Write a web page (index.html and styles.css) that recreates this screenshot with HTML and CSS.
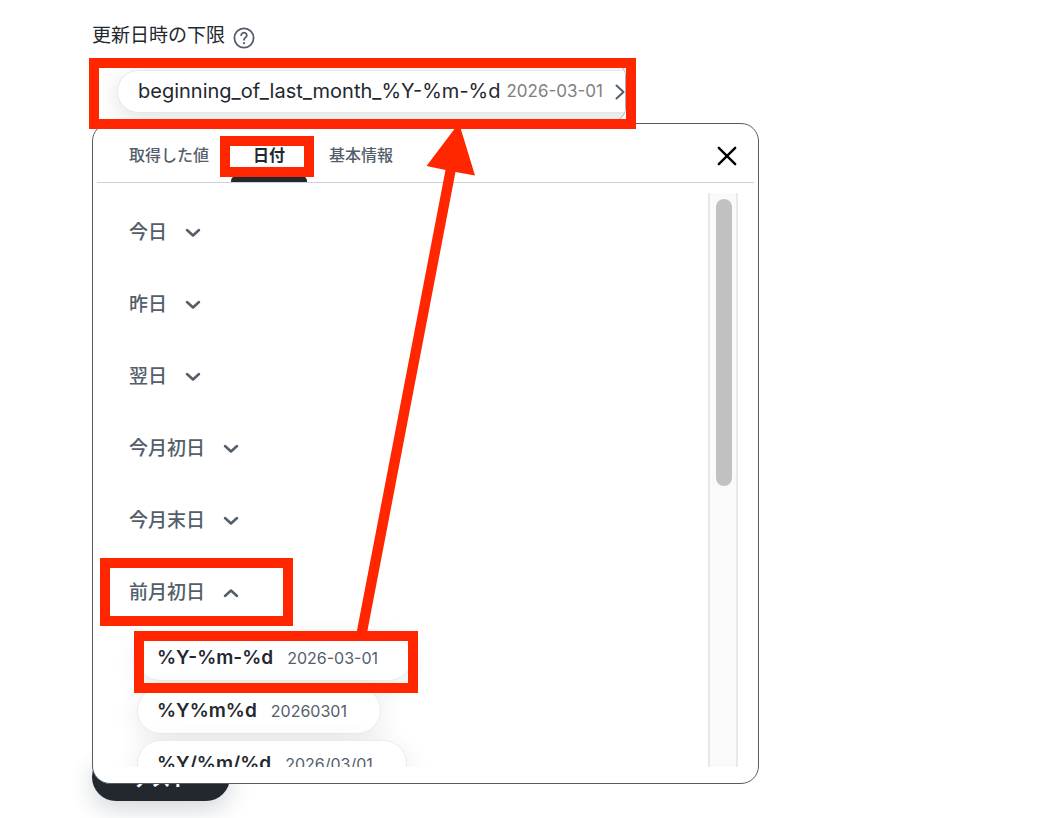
FILE: index.html
```
<!DOCTYPE html>
<html lang="ja">
<head>
<meta charset="utf-8">
<title>更新日時の下限</title>
<link rel="stylesheet" href="styles.css">
</head>
<body>
<main class="form">
  <div class="field-head">
    <span class="field-label" id="lower-label">更新日時の下限</span>
    <button class="help" type="button" aria-label="ヘルプ">
      <svg width="24" height="24" viewBox="0 0 24 24" fill="none" stroke="currentColor" stroke-width="1.800" stroke-linecap="round" stroke-linejoin="round"><circle cx="12" cy="12" r="9.600"/><path d="M9.200 9.200a2.800 2.700 0 1 1 4.300 2.400c-1 .7-1.500 1.200-1.500 2.200"/><path d="M12 17v.2" stroke-width="2.200"/></svg>
    </button>
  </div>
  <div class="picker">
    <div class="field" role="group" aria-labelledby="lower-label">
      <button class="token" type="button">
        <span class="token-name">beginning_of_last_month_%Y-%m-%d</span>
        <span class="token-value">2026-03-01</span>
        <svg class="token-arrow" width="10" height="16" viewBox="0 0 10 16" fill="none" stroke="currentColor" stroke-width="2" stroke-linecap="round" stroke-linejoin="round"><path d="M1.500 1.500 8.500 8l-7 6.500"/></svg>
      </button>
    </div>
    <section class="popup">
      <header class="popup-head">
        <div class="tabs" role="tablist">
          <button class="tab" type="button" role="tab" aria-selected="false">取得した値</button>
          <button class="tab tab-active" type="button" role="tab" aria-selected="true">日付</button>
          <button class="tab" type="button" role="tab" aria-selected="false">基本情報</button>
        </div>
        <button class="close" type="button" aria-label="閉じる">
          <svg width="20" height="20" viewBox="0 0 20 20" fill="none" stroke="currentColor" stroke-width="2.400" stroke-linecap="round"><path d="M1.800 1.800l16.400 16.400M18.200 1.800 1.800 18.200"/></svg>
        </button>
      </header>
      <div class="popup-body">
        <div class="list">
          <button class="group" type="button" aria-expanded="false">今日<svg class="chevron" viewBox="0 0 16 10"><path d="M2 2l6 5.500L14 2"/></svg></button>
          <button class="group" type="button" aria-expanded="false">昨日<svg class="chevron" viewBox="0 0 16 10"><path d="M2 2l6 5.500L14 2"/></svg></button>
          <button class="group" type="button" aria-expanded="false">翌日<svg class="chevron" viewBox="0 0 16 10"><path d="M2 2l6 5.500L14 2"/></svg></button>
          <button class="group" type="button" aria-expanded="false">今月初日<svg class="chevron" viewBox="0 0 16 10"><path d="M2 2l6 5.500L14 2"/></svg></button>
          <button class="group" type="button" aria-expanded="false">今月末日<svg class="chevron" viewBox="0 0 16 10"><path d="M2 2l6 5.500L14 2"/></svg></button>
          <button class="group" type="button" aria-expanded="true">前月初日<svg class="chevron" viewBox="0 0 16 10"><path d="M2 8l6-5.500L14 8"/></svg></button>
          <div class="options">
            <button class="option" type="button"><b class="option-name">%Y-%m-%d</b><span class="option-value">2026-03-01</span></button>
            <button class="option" type="button"><b class="option-name">%Y%m%d</b><span class="option-value">20260301</span></button>
            <button class="option" type="button"><b class="option-name">%Y/%m/%d</b><span class="option-value">2026/03/01</span></button>
          </div>
        </div>
        <div class="scrollbar"><div class="thumb"></div></div>
      </div>
    </section>
  </div>
  <button class="submit" type="button">テスト</button>
</main>
<svg class="marks" width="640" height="700" viewBox="0 0 640 700" aria-hidden="true">
  <g fill="none" stroke="#ff2600" stroke-width="10">
    <rect x="94" y="63" width="537" height="61"/>
    <rect x="225" y="141" width="84" height="31"/>
    <rect x="105" y="563" width="183" height="58"/>
    <rect x="139" y="636" width="274" height="52"/>
  </g>
  <path fill="#ff2600" d="M459 123 475 175.500 455.500 172 367 633h-10.500L445.500 170 426.500 166z"/>
</svg>
</body>
</html>
```
FILE: styles.css
```
* { box-sizing: border-box; }
body {
  margin: 0;
  min-height: 100vh;
  overflow: hidden;
  background: #fff;
  color: #23282f;
  font-family: Inter, "Noto Sans CJK JP", sans-serif;
}
button {
  margin: 0;
  padding: 0;
  border: 0;
  background: none;
  color: inherit;
  font: inherit;
}
svg { display: block; flex: none; }
.form { padding: 20px 92px; }
.field-head {
  display: flex;
  align-items: center;
  gap: 7px;
  height: 32px;
}
.field-label { font-size: 19px; line-height: 32px; }
.help { color: #545e6b; padding-top: 3px; }
.picker { position: relative; margin-top: 10px; }
.field {
  width: 100%;
  max-width: 534px;
  height: 60px;
  padding: 7px 0 0 24px;
  border: 1px solid #a9b1bb;
  border-radius: 14px;
  overflow: hidden;
}
.token {
  display: flex;
  align-items: center;
  gap: 6px;
  width: 560px;
  height: 43px;
  padding: 0 0 2px 20px;
  border: 1px solid #e6e8ec;
  border-radius: 22px;
  background: #fff;
  box-shadow: 0 6px 24px rgba(0, 0, 0, 0.12);
  white-space: nowrap;
}
.token-name { font-size: 20px; }
.token-value { font-size: 17px; color: #808080; }
.token-arrow { color: #545e6b; margin: 2px 0 0 6px; }
.popup {
  position: absolute;
  top: 61px;
  left: 0;
  width: 100%;
  max-width: 667px;
  padding: 0 4px 16px;
  border: 1px solid #545e6b;
  border-radius: 18px;
  background: #fff;
}
.popup-head {
  display: flex;
  justify-content: space-between;
  align-items: center;
  height: 59px;
  padding: 0 17px 0 10px;
  border-bottom: 1px solid #cbd3dc;
}
.tabs { display: flex; align-self: stretch; }
.tab {
  position: relative;
  padding: 2px 22px 0;
  color: #545e6b;
  font-size: 16px;
  font-weight: 500;
}
.tab-active { color: #23282f; font-weight: 700; }
.tab-active::after {
  content: "";
  position: absolute;
  left: 0;
  right: 0;
  bottom: 0;
  height: 6px;
  border-radius: 5px 5px 0 0;
  background: #23282f;
}
.close { color: #000; margin-top: 5px; }
.popup-body {
  display: flex;
  height: 574px;
  margin: 10px 16px 0 0;
}
.list {
  flex: 1;
  overflow: hidden;
  padding: 1px 0 0 32px;
}
.group {
  display: flex;
  align-items: center;
  gap: 18px;
  height: 72px;
  color: #545e6b;
  font-size: 19px;
  font-weight: 500;
}
.chevron {
  width: 16px;
  height: 10px;
  margin-top: 6px;
  fill: none;
  stroke: currentColor;
  stroke-width: 2.500;
  stroke-linecap: round;
  stroke-linejoin: round;
}
.options {
  display: flex;
  flex-direction: column;
  align-items: flex-start;
  gap: 6px;
  padding: 8px 0 0 8px;
}
.option {
  display: flex;
  flex: none;
  align-items: center;
  gap: 14px;
  height: 47px;
  padding: 0 33px 0 19px;
  border: 1px solid #e9ecf2;
  border-radius: 24px;
  background: #fff;
  box-shadow: 0 6px 28px rgba(0, 0, 0, 0.09);
}
.option-name { font-size: 19px; font-weight: 600; }
.option-value { font-size: 16px; color: #545e6b; }
.scrollbar {
  flex: none;
  width: 30px;
  padding: 6px;
  border: solid #e8e8e8;
  border-width: 0 2px;
  background: #fafafa;
}
.thumb {
  width: 16px;
  height: 51%;
  border-radius: 8px;
  background: #c1c1c1;
}
.submit {
  display: block;
  width: 138px;
  height: 48px;
  margin-top: 631px;
  border-radius: 24px;
  background: #23282f;
  color: #fff;
  font-size: 19px;
  font-weight: 700;
  box-shadow: 0 8px 24px rgba(35, 50, 65, 0.2);
}
.marks { position: absolute; top: 0; left: 0; }
```
